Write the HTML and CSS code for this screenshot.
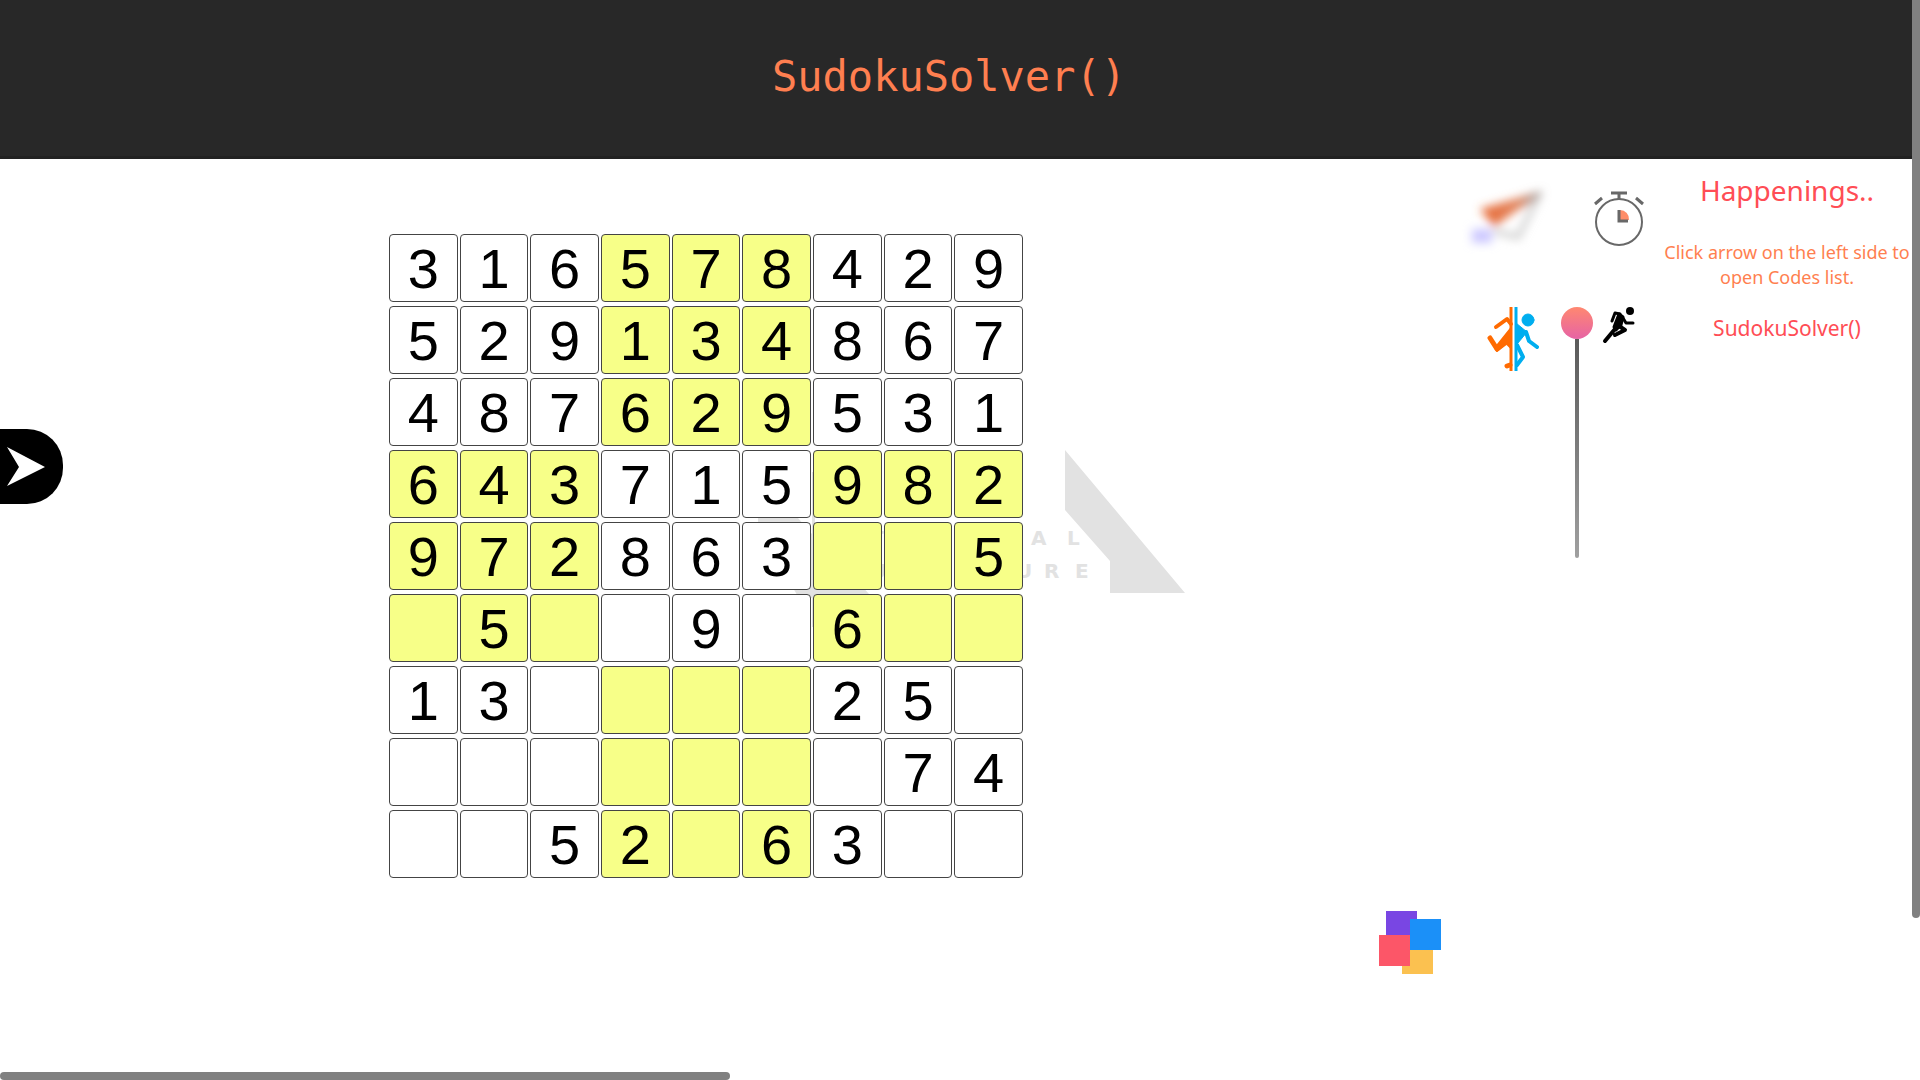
FILE: index.html
```html
<!DOCTYPE html>
<html lang="en">
<head>
<meta charset="utf-8">
<title>SudokuSolver()</title>
<link rel="stylesheet" href="styles.css">
</head>
<body>
<header class="header"><h1 class="title">SudokuSolver()</h1></header>
<main class="main">
  <section class="stage">
    <svg class="watermark" viewBox="0 0 444 200" aria-hidden="true">
      <path fill="#e2e2e2" d="M324 0L444 143H369V111L324 60ZM17 68h40l14 16V22h3v62l54 60v4H58L17 80ZM71 140h3v37h-3Z"/>
      <g class="brand">
        <text x="129" y="95">T</text><text x="201" y="95">I</text><text x="290" y="95">A</text><text x="326" y="95">L</text>
        <text x="129" y="128">U</text><text x="275" y="128">U</text><text x="303" y="128">R</text><text x="334" y="128">E</text>
      </g>
    </svg>
    <form class="board" id="board" aria-label="Sudoku board"></form>
    <svg class="blocks" viewBox="0 0 64 64" aria-label="Animated blocks" role="img">
      <path fill="#7946e3" d="M8 0h31v32H8z"/><path fill="#fbc150" d="M24 31h31v32H24z"/>
      <path fill="#fc5668" d="M1 24h31v31H1z"/><path fill="#1b90f8" d="M32 8h31v31H32z"/>
    </svg>
  </section>
  <section class="icons">
    <svg class="plane" viewBox="0 0 100 70" aria-hidden="true">
      <defs><filter id="soft" x="-30%" y="-30%" width="160%" height="160%"><feGaussianBlur stdDeviation="5"/></filter>
      <linearGradient id="wing"><stop offset="0" stop-color="#e86a36"/><stop offset=".6" stop-color="#e2825a"/><stop offset="1" stop-color="#909090"/></linearGradient></defs>
      <g filter="url(#soft)"><path fill="url(#wing)" d="M22 20L84 2 82 8 58 22 36 38Z"/><path fill="none" stroke="#ccc" stroke-width="5" d="M80 8L60 48 36 42"/><path fill="#ccc8ff" d="M14 40h20v14H14z"/></g>
    </svg>
    <svg class="watch" viewBox="0 0 50 56" fill="none" stroke="#686868" stroke-width="2" aria-hidden="true">
      <path fill="#ff8d68" stroke="none" d="M26 19a9 9 0 0 1 9 10h-9z"/>
      <circle cx="25" cy="31" r="23"/><path stroke-width="3" d="M17 2h16M25 2v6M25 19v11h9"/><path stroke-width="3" d="M1 13l7-6M49 13l-7-6"/>
    </svg>
    <svg class="portal" viewBox="0 0 52 66" aria-hidden="true">
      <g stroke="#ff6a00" stroke-linecap="round" stroke-linejoin="round" fill="none"><path stroke-width="3" stroke-linecap="butt" d="M24 1v64"/><path stroke-width="4" d="M9 21l11-8 4 5"/><path stroke-width="5" d="M3 32l7 11 8-6M20 60l3-1"/><path fill="#ff6a00" stroke-width="2" d="M24 22v20l-5-5-9 8-2-3z"/></g>
      <g stroke="#00aeef" stroke-linecap="round" stroke-linejoin="round" fill="none"><path stroke-width="3" stroke-linecap="butt" d="M29 1v64"/><circle cx="41" cy="14" r="6" fill="#00aeef"/><path fill="#00aeef" d="M29 17l11 9-9 11h-2z"/><path stroke-width="4" d="M39 26l3 9 8 6M30 39l6 12-6 8"/></g>
    </svg>
    <div class="pin" aria-hidden="true"><span class="knob"></span><span class="rod"></span></div>
    <svg class="runner" viewBox="0 0 34 40" fill="none" stroke="#000" stroke-linecap="round" stroke-linejoin="round" aria-hidden="true">
      <circle cx="28" cy="5" r="4" fill="#000" stroke="none"/><path fill="#000" stroke-width="3" d="M17 8l4 3-2 8-5 5-2-3z"/><path stroke-width="3" d="M18 8l-5-1-3 8M21 12l3 5h7"/><path stroke-width="4" d="M13 23L3 35M17 20l6 4-10 5"/>
    </svg>
  </section>
  <aside class="news">
    <h2 class="news-title">Happenings..</h2>
    <p class="hint">Click arrow on the left side to open Codes list.</p>
    <p class="current">SudokuSolver()</p>
  </aside>
</main>
<button class="opener" type="button" aria-label="Open Codes list"><svg viewBox="0 0 38 40" aria-hidden="true"><path fill="#fff" d="M0 0L38 20 0 39 12 20z"/></svg></button>
<div class="bar bar-v"></div><div class="bar bar-h"></div>
<script src="board.js"></script>
</body>
</html>
```
FILE: styles.css
```css
* { box-sizing: border-box; }
body { margin: 0; min-height: 100vh; padding-right: 8px; overflow: hidden; background: #fff; font-family: "Noto Sans", sans-serif; }
.header { height: 159px; background: #282828; border-bottom: 3px solid #222; text-align: center; padding: 52px 14px 0 0; }
.title { margin: 0; font: 400 42px/50px "DejaVu Sans Mono", monospace; color: #ff7f50; }
.main { display: grid; grid-template-columns: minmax(0, 1fr) 204px 250px; }
.stage { position: relative; padding: 75px 0 0 389px; }
.board { position: relative; display: grid; grid-template-columns: repeat(9, 1fr); gap: 4px 2px; width: 634px; }
.cell { width: 100%; min-width: 0; height: 68px; padding: 0; border: 1px solid #444; border-radius: 4px; background: #fff; color: #000; font: 56px/64px "Liberation Sans", Arial, sans-serif; text-align: center; }
.cell.alt { background: #f7ff88; }
.watermark { position: absolute; left: 741px; top: 291px; width: 444px; height: 200px; }
.brand { fill: #e2e2e2; font: 700 20px "DejaVu Sans", sans-serif; }
.blocks { display: block; width: 64px; height: 64px; margin: 33px 0 0 989px; }
.icons { display: grid; grid-template-columns: 100px 32px 60px; column-gap: 3px; grid-template-rows: 117px auto; padding-top: 30px; align-items: start; }
.plane { width: 100px; height: 70px; overflow: visible; }
.watch { grid-column: 2 / 4; justify-self: end; width: 50px; height: 56px; margin: 2px 12px 0 0; }
.portal { width: 52px; height: 66px; margin-left: 29px; }
.pin { display: flex; flex-direction: column; align-items: center; padding-top: 1px; }
.knob { width: 32px; height: 32px; border-radius: 50%; background: linear-gradient(#ff8870, #e663a5); }
.rod { width: 4px; height: 219px; border-radius: 0 0 2px 2px; background: linear-gradient(#5a5a5a, #a0a0a0); }
.runner { width: 34px; height: 40px; margin-left: 6px; }
.news { padding: 11px 0 0; text-align: center; }
.news-title { margin: 0 0 30px; font-size: 28px; line-height: 40px; font-weight: 400; color: #ff4d55; }
.hint { margin: 0 0 24px; font-size: 18px; line-height: 25px; color: #ff7f50; }
.current { margin: 0; font-size: 21px; line-height: 28px; color: #ff4d55; }
.opener { position: fixed; left: 0; top: 429px; width: 63px; height: 75px; padding: 0 0 0 7px; border: 0; border-radius: 0 36px 36px 0; background: #000; }
.opener svg { display: block; width: 38px; height: 40px; }
.bar { position: fixed; background: #808080; }
.bar-v { right: 0; top: 0; width: 8px; height: 85vh; border-radius: 0 0 4px 4px; }
.bar-h { left: 0; bottom: 0; height: 8px; width: 38vw; border-radius: 4px; }
```
FILE: board.js
```js
const rows = ["316578429", "529134867", "487629531", "643715982", "972863  5", " 5  9 6  ", "13    25 ", "       74", "  52 63  "];
const board = document.getElementById("board");
rows.forEach((row, r) => {
  [...row].forEach((digit, c) => {
    const cell = document.createElement("input");
    cell.className = "cell" + ((Math.floor(r / 3) + Math.floor(c / 3)) % 2 ? " alt" : "");
    cell.value = digit.trim();
    cell.maxLength = 1;
    cell.setAttribute("aria-label", `Row ${r + 1}, column ${c + 1}`);
    board.append(cell);
  });
});
```
